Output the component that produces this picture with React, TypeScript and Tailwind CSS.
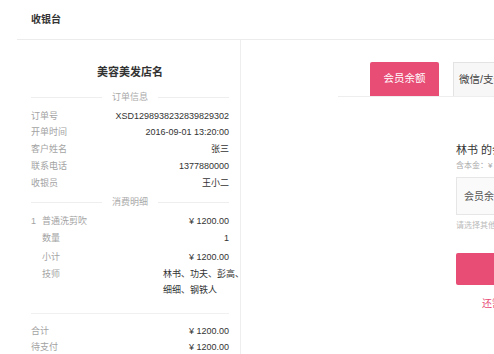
import React from "react";

const font = { fontFamily: '"Liberation Sans", "Noto Sans CJK SC", sans-serif' };

function Row({ label, value }: { label: string; value: string }) {
  return (
    <div className="flex h-[16.8px] items-center justify-between text-[9px]">
      <span className="text-[#a3a3a3]">{label}</span>
      <span className="text-[#333]">{value}</span>
    </div>
  );
}

function Divider({ text }: { text: string }) {
  return (
    <div className="mb-[2px] flex h-[17px] items-center text-[9px] text-[#aaa]">
      <div className="h-px flex-1 bg-[#eeeeee]" />
      <span className="px-[10px]">{text}</span>
      <div className="h-px flex-1 bg-[#eeeeee]" />
    </div>
  );
}

export default function App() {
  return (
    <div className="h-[354px] w-[494px] overflow-hidden bg-white" style={font}>
      <div className="ml-[17px] flex h-[40px] items-center border-b border-[#ececec] pl-[14px] text-[10px] font-bold text-[#333]">
        收银台
      </div>
      <div className="ml-[17px] flex h-[314px]">
        <div className="w-[224px] shrink-0 border-r border-[#eeeeee] pl-[14px] pr-[11px]">
          <div className="mt-[24px] h-[16px] text-center text-[11px] font-bold leading-[16px] text-[#333]">
            美容美发店名
          </div>
          <div className="mt-[9px]">
            <Divider text="订单信息" />
          </div>
          <Row label="订单号" value="XSD1298938232839829302" />
          <Row label="开单时间" value="2016-09-01  13:20:00" />
          <Row label="客户姓名" value="张三" />
          <Row label="联系电话" value="1377880000" />
          <Row label="收银员" value="王小二" />
          <div className="mt-[2px]">
            <Divider text="消费明细" />
          </div>
          <div className="mt-[2.5px] flex h-[17px] items-center justify-between text-[9px]">
            <span className="text-[#a3a3a3]">
              1<span className="ml-[6px]">普通洗剪吹</span>
            </span>
            <span className="text-[#333]">¥ 1200.00</span>
          </div>
          <div className="pl-[11px]">
            <div className="flex h-[17px] items-center justify-between text-[9px]">
              <span className="text-[#a3a3a3]">数量</span>
              <span className="text-[#333]">1</span>
            </div>
            <div className="mt-[2px] flex h-[17px] items-center justify-between text-[9px]">
              <span className="text-[#a3a3a3]">小计</span>
              <span className="text-[#333]">¥ 1200.00</span>
            </div>
            <div className="flex justify-between text-[9px] leading-[16px]">
              <span className="text-[#a3a3a3]">技师</span>
              <span className="mr-[-4px] w-[70px] whitespace-nowrap text-[#333]">
                林书、功夫、彭高、
                <br />
                细细、钢铁人
              </span>
            </div>
          </div>
          <div className="mt-[15px] h-px bg-[#f0f0f0]" />
          <div className="pt-[8.5px]">
            <Row label="合计" value="¥ 1200.00" />
            <Row label="待支付" value="¥ 1200.00" />
          </div>
        </div>
        <div className="min-w-0 flex-1 overflow-hidden">
          <div className="ml-[97px] mt-[22px] flex border-b border-[#eeeeee] pl-[32px]">
            <div className="flex h-[34px] w-[69px] shrink-0 items-center justify-center rounded-t-[2px] bg-[#e84d76] text-[10.5px] text-white">
              会员余额
            </div>
            <div className="ml-[14px] flex h-[34px] w-[80px] shrink-0 items-center whitespace-nowrap border border-b-0 border-[#e3e3e3] bg-[#f7f7f7] pl-[5px] text-[10.5px] text-[#444]">
              微信/支付宝
            </div>
          </div>
          <div className="ml-[215px] w-[200px] whitespace-nowrap">
            <div className="mt-[45px] text-[11px] leading-[16px] text-[#333]">林书 的会员余额</div>
            <div className="mt-[2px] text-[8px] leading-[12px] text-[#aaa]">含本金：¥ 1200.00</div>
            <div className="mt-[5px] flex h-[38px] items-center border border-[#e6e6e6] bg-[#fafafa] pl-[7px] text-[10px] text-[#555]">
              会员余额支付
            </div>
            <div className="mt-[5px] text-[8px] leading-[12px] text-[#bbb]">请选择其他支付方式</div>
            <div className="mt-[21px] flex h-[32px] items-center justify-center rounded-[2px] bg-[#e84d76] text-[11px] text-white">
              确认收款
            </div>
            <div className="mt-[13px] pl-[26px] text-[10px] leading-[12px] text-[#e84d76]">还需支付 ¥ 1200.00</div>
          </div>
        </div>
      </div>
    </div>
  );
}
